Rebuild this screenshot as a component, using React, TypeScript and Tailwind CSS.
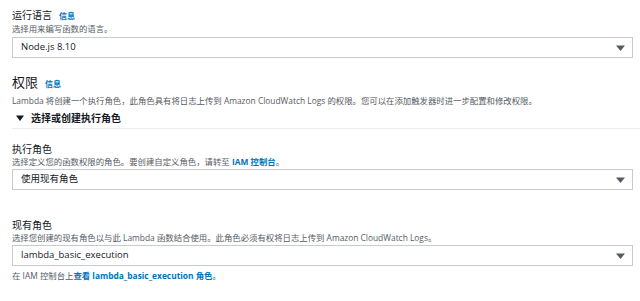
const font = "font-['Open_Sans','Noto_Sans_CJK_SC',sans-serif]"

function Caret() {
  return (
    <svg width="9" height="6" viewBox="0 0 9 6" className="shrink-0">
      <path d="M0 0.5H9L4.5 6Z" fill="#545b64" />
    </svg>
  )
}

function Select(props: { value: string }) {
  return (
    <div className="mr-[7px] h-[21px] flex items-center justify-between border border-[#c6cccd] bg-white pl-[8px] pr-[7px] text-[9.5px] text-[#16191f]">
      <span>{props.value}</span>
      <Caret />
    </div>
  )
}

function Info() {
  return <span className="ml-[7px] text-[8px] font-bold text-[#0073bb]">信息</span>
}

export default function App() {
  return (
    <main className={"w-[640px] h-[301px] bg-white overflow-hidden " + font}>
      <div className="pl-[12px] pt-[8px]">
        {/* runtime */}
        <div className="flex items-baseline leading-[14px] text-[10px] text-[#16191f]">
          运行语言<Info />
        </div>
        <div className="leading-[11px] text-[8.4px] text-[#545b64]">选择用来编写函数的语言。</div>
        <div className="mt-[3px]">
          <Select value="Node.js 8.10" />
        </div>

        {/* permissions */}
        <div className="mt-[16px] flex items-baseline leading-[16px] text-[13px] text-[#16191f]">
          权限<Info />
        </div>
        <div className="mt-[3px] leading-[11px] text-[8.4px] text-[#545b64]">
          Lambda 将创建一个执行角色，此角色具有将日志上传到 Amazon CloudWatch Logs 的权限。您可以在添加触发器时进一步配置和修改权限。
        </div>
        <div className="mt-[5px] flex items-center leading-[14px] text-[10px] font-bold text-[#16191f]">
          <svg width="8" height="6" viewBox="0 0 8 6" className="ml-[4px] mr-[7px]">
            <path d="M0 0.5H8L4 6Z" fill="#16191f" />
          </svg>
          选择或创建执行角色
        </div>
      </div>
      <div className="mt-[3px] ml-[12px] border-t border-[#eaeded]" />

      <div className="pl-[12px]">
        <div className="mt-[13px] leading-[14px] text-[10px] text-[#16191f]">执行角色</div>
        <div className="leading-[11px] text-[8.4px] text-[#545b64]">
          选择定义您的函数权限的角色。要创建自定义角色，请转至 <span className="font-bold text-[#0073bb]">IAM 控制台</span>。
        </div>
        <div className="mt-[2px]">
          <Select value="使用现有角色" />
        </div>

        <div className="mt-[28px] leading-[14px] text-[10px] text-[#16191f]">现有角色</div>
        <div className="leading-[11px] text-[8.4px] text-[#545b64]">
          选择您创建的现有角色以与此 Lambda 函数结合使用。此角色必须有权将日志上传到 Amazon CloudWatch Logs。
        </div>
        <div className="mt-[2px]">
          <Select value="lambda_basic_execution" />
        </div>
        <div className="mt-[4px] leading-[11px] text-[8.4px] text-[#545b64]">
          在 IAM 控制台上<span className="font-bold text-[#0073bb]">查看 lambda_basic_execution 角色</span>。
        </div>
      </div>
    </main>
  )
}
